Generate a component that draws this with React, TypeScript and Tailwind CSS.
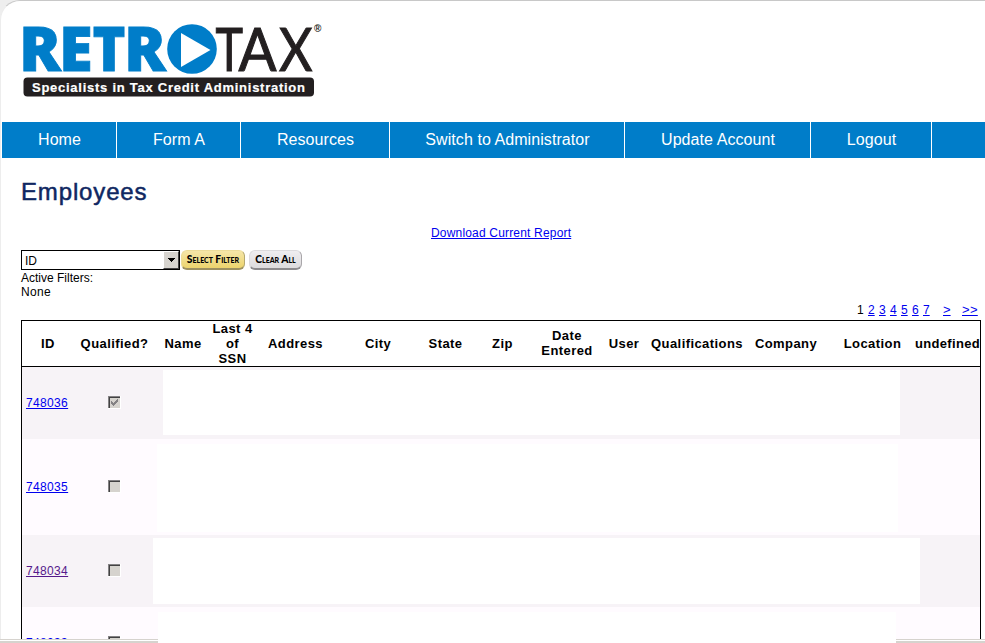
import React from "react";

const nav = [
  { label: "Home", width: "w-[115px]" },
  { label: "Form A", width: "w-[124px]" },
  { label: "Resources", width: "w-[149px]" },
  { label: "Switch to Administrator", width: "w-[235px]" },
  { label: "Update Account", width: "w-[186px]" },
  { label: "Logout", width: "w-[121px]" },
];

const columns = [
  { label: "ID", className: "pl-px" },
  { label: "Qualified?", className: "" },
  { label: "Name", className: "" },
  { label: "Last 4 of SSN", className: "" },
  { label: "Address", className: "" },
  { label: "City", className: "" },
  { label: "State", className: "" },
  { label: "Zip", className: "pl-px" },
  { label: "Date Entered", className: "pb-px" },
  { label: "User", className: "" },
  { label: "Qualifications", className: "" },
  { label: "Company", className: "" },
  { label: "Location", className: "pl-[6px]" },
  { label: "undefined", className: "pl-px tracking-[0.3px]" },
];

const rows = [
  { id: "748036", checked: true, row: "h-[72px] bg-[#f7f3f7]", link: "text-[#0000ee]", blank: "ml-[8px] mt-[3px] h-[65px] w-[737px]" },
  { id: "748035", checked: false, row: "h-[96px] bg-[#fffbff]", link: "text-[#0000ee]", blank: "ml-[2px] mt-[5px] h-[88px] w-[741px]" },
  { id: "748034", checked: false, row: "h-[72px] bg-[#f7f3f7]", link: "text-[#551a8b]", blank: "-ml-[2px] mt-[3px] h-[66px] w-[767px]" },
  { id: "748033", checked: false, row: "h-[72px] bg-[#fffbff]", link: "text-[#0000ee]", blank: "ml-[3px] mt-[5px] h-[67px] w-[738px]" },
];

function Logo() {
  return (
    <svg width="304" height="82" viewBox="20 20 304 82" className="block overflow-visible">
      <text y="71.3" fontFamily="Open Sans" fontWeight="800" fontSize="61.5" fill="#007dc9" stroke="#007dc9" strokeWidth="0.8">
        <tspan x="19" textLength="42" lengthAdjust="spacingAndGlyphs">R</tspan>
        <tspan x="59">E</tspan>
        <tspan x="92.500" textLength="33" lengthAdjust="spacingAndGlyphs">T</tspan>
        <tspan x="124" textLength="42" lengthAdjust="spacingAndGlyphs">R</tspan>
      </text>
      <circle cx="192" cy="49" r="24.800" fill="#007dc9" />
      <path d="M181 33v34l29.500-17z" fill="#fff" />
      <text y="70.8" fontFamily="Lato" fontWeight="400" fontSize="60.5" fill="#231f20" stroke="#231f20" strokeWidth="1.1">
        <tspan x="215.500" textLength="27.500" lengthAdjust="spacingAndGlyphs">T</tspan>
        <tspan x="238.500" textLength="38" lengthAdjust="spacingAndGlyphs">A</tspan>
        <tspan x="279" textLength="33.500" lengthAdjust="spacingAndGlyphs">X</tspan>
      </text>
      <text x="314" y="32" fontFamily="Liberation Sans" fontWeight="700" fontSize="10" fill="#231f20">®</text>
      <rect x="23.500" y="77.500" width="290.500" height="19" rx="4" fill="#231f20" />
      <text x="32" y="91.500" textLength="273" fontFamily="Liberation Sans" fontWeight="700" fontSize="13" fill="#fff" stroke="#fff" strokeWidth="0.2">
        Specialists in Tax Credit Administration
      </text>
    </svg>
  );
}

function Checkbox({ checked }: { checked: boolean }) {
  return (
    <svg width="13" height="13" viewBox="0 0 13 13" shapeRendering="crispEdges">
      <path d="M0 0h13v13H0z" fill="#fff" />
      <path d="M0 0h12v12H0z" fill="#848284" />
      <path d="M1 1h11v11H1z" fill="#424142" />
      <path d="M2 2h10v10H2z" fill="#d6d3ce" />
      {checked && <path d="M3 5h1v1h1v1h1v-1h1v-1h1v-1h1v-1h1v3h-1v1h-1v1h-1v1h-1v1h-1v-1h-1v-1h-1z" fill="#848284" />}
    </svg>
  );
}

function Pagination() {
  return (
    <div className="flex h-[20px] items-center pl-[836px] text-[12px] leading-[20px]">
      <span className="w-[11px]">1</span>
      {["2", "3", "4", "5", "6", "7"].map((n) => (
        <span key={n} className="w-[11px] text-[#0000ee] underline">{n}</span>
      ))}
      <span className="ml-[9px] w-[19px] text-[#0000ee]"><span className="underline text-[13px]">&gt;</span></span>
      <span className="text-[13px] text-[#0000ee] underline tracking-[0.3px]">&gt;&gt;</span>
    </div>
  );
}

export default function App() {
  return (
    <div className="relative h-[643px] w-[985px] overflow-hidden bg-[#eeeeee] font-['Liberation_Sans',Arial,sans-serif] text-black">
      <div className="h-[643px] w-[1010px] rounded-tl-[20px] border-l border-t border-l-[#ededed] border-t-[#c8c8c8] bg-white">
        <header className="h-[121px] pl-[19px] pt-[19px]">
          <Logo />
        </header>
        <nav className="ml-px flex h-[36px] bg-[#007dc9] text-[16px] tracking-[0.07px] text-white">
          {nav.map((item) => (
            <div key={item.label} className={`flex shrink-0 items-center justify-center border-r border-white pl-px ${item.width}`}>
              {item.label}
            </div>
          ))}
        </nav>
        <main className="ml-[20px] w-[960px]">
          <h1 className="pt-[18px] text-[24px] leading-[32px] tracking-[0.85px] text-[#0f2762] [-webkit-text-stroke:0.5px_#0f2762]">Employees</h1>
          <div className="h-[42px] pl-[410px] pt-[17px] text-[12px] leading-[16px] tracking-[0.18px] text-[#0000ee]">
            <span className="underline">Download Current Report</span>
          </div>
          <div className="flex h-[20px]">
            <div className="flex h-[20px] w-[159px] items-center justify-between border border-black pl-[3px] text-[12px]">
              <span className="pt-[2px]">ID</span>
              <span className="flex h-[18px] w-[16px] items-center justify-center border border-b-[#424142] border-l-white border-r-[#424142] border-t-white bg-[#d6d3ce]">
                <svg width="7" height="4" viewBox="0 0 7 4" shapeRendering="crispEdges"><path d="M0 0h7v1h-1v1h-1v1h-1v1h-1v-1h-1v-1h-1v-1h-1z" /></svg>
              </span>
            </div>
            <div className="ml-[1px] flex h-[20px] w-[64px] items-center justify-center rounded-[6px] border border-b-2 border-[#ecdc98] border-b-[#9d9161] border-r-[#b5a870] bg-linear-to-b from-[#f5e6a8] to-[#edd46c]">
              <span className="whitespace-nowrap font-['Lato'] text-[10.3px] font-black [font-variant-caps:small-caps]">Select Filter</span>
            </div>
            <div className="ml-[4px] flex h-[20px] w-[53px] items-center justify-center rounded-[6px] border border-b-2 border-[#dcdadd] border-b-[#8d8b8e] border-r-[#a9a7aa] bg-linear-to-b from-[#efedf0] to-[#dddbdd]">
              <span className="whitespace-nowrap font-['Lato'] text-[10.3px] font-black [font-variant-caps:small-caps]">Clear All</span>
            </div>
          </div>
          <div className="h-[30px] pt-px text-[12px] leading-[14px]">
            <div>Active Filters:</div>
            <div className="tracking-[0.3px]">None</div>
          </div>
          <Pagination />
          <section className="w-[960px] border border-b-0 border-black">
            <div className="grid h-[46px] grid-cols-[51px_83px_54px_45px_81px_84px_51px_62px_68px_46px_100px_78px_89px_66px] items-center border-b border-black text-center text-[13px] font-bold leading-[15px] tracking-[0.42px]">
              {columns.map((col) => (
                <div key={col.label} className={col.className}>{col.label}</div>
              ))}
            </div>
            {rows.map((r) => (
              <div key={r.id} className={`flex items-start ${r.row}`}>
                <div className={`flex h-full w-[51px] shrink-0 items-center pl-[4px] text-[12px] tracking-[0.35px] ${r.link}`}>
                  <span className="underline">{r.id}</span>
                </div>
                <div className="flex h-full w-[82px] shrink-0 items-center pb-[1px] pl-[35px]">
                  <Checkbox checked={r.checked} />
                </div>
                <div className={`relative z-10 shrink-0 bg-white ${r.blank}`} />
              </div>
            ))}
          </section>
        </main>
      </div>
      <div className="absolute bottom-0 left-0 flex h-[4px] w-full justify-between">
        <div className="h-[4px] w-[158px] border-b-2 border-t border-[#d6d3ce] bg-white" />
        <div className="h-[4px] w-[89px] border-b-2 border-t border-[#d6d3ce] bg-white" />
      </div>
    </div>
  );
}
